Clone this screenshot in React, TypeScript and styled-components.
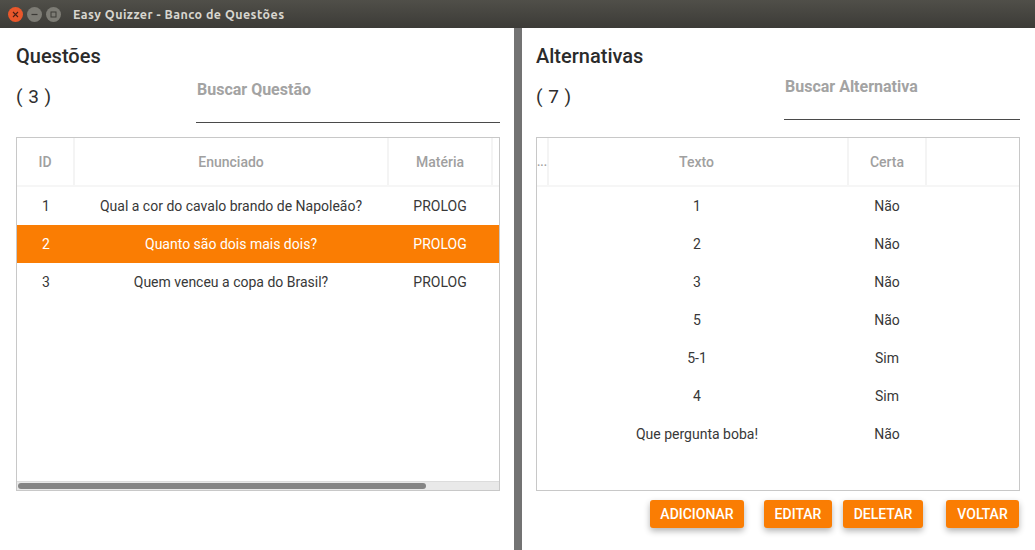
import React from 'react';
import styled, { createGlobalStyle } from 'styled-components';

const Global = createGlobalStyle`
    html, body {
        margin: 0;
        padding: 0;
        background: #fff;
        overflow: hidden;
    }
    #root {
        width: 1035px;
        height: 550px;
    }
`;

const Window = styled.div`
    display: flex;
    flex-direction: column;
    width: 1035px;
    height: 550px;
    font-family: Roboto, 'Liberation Sans', sans-serif;
    color: #2c2c2c;
    background: #fff;
`;

const TitleBar = styled.div`
    display: flex;
    align-items: center;
    flex: 0 0 28px;
    box-sizing: border-box;
    padding-left: 8px;
    background: linear-gradient(#504f49, #3c3b37);
`;

const WinButton = styled.div<{ $bg: string; $gap: number }>`
    display: flex;
    align-items: center;
    justify-content: center;
    width: 15px;
    height: 15px;
    margin-right: ${({ $gap }) => $gap}px;
    border-radius: 50%;
    background: ${({ $bg }) => $bg};
`;

const WindowTitle = styled.div`
    margin-left: 12px;
    font-family: Ubuntu, 'Noto Sans', 'Open Sans', sans-serif;
    font-size: 12.5px;
    font-weight: 700;
    letter-spacing: 0.45px;
    color: #d8d6cf;
`;

const Body = styled.div`
    display: flex;
    flex: 1;
    min-height: 0;
`;

const Pane = styled.div<{ $width: number; $left: number }>`
    display: flex;
    flex-direction: column;
    box-sizing: border-box;
    width: ${({ $width }) => $width}px;
    padding: 16px 0 0 ${({ $left }) => $left}px;
`;

const Divider = styled.div`
    flex: 0 0 8px;
    background: #737373;
`;

const Heading = styled.div`
    height: 24px;
    font-size: 20px;
    line-height: 24px;
    font-weight: 500;
    color: #2b2b2b;
`;

const InfoRow = styled.div`
    display: flex;
    justify-content: space-between;
    height: 69px;
    width: 484px;
`;

const Count = styled.div`
    margin-top: 17px;
    font-size: 19px;
    line-height: 24px;
    letter-spacing: 0.5px;
    color: #2f2f2f;
`;

const SearchField = styled.div<{ $width: number; $top: number }>`
    box-sizing: border-box;
    width: ${({ $width }) => $width}px;
    height: ${({ $top }) => $top}px;
    padding: ${({ $top }) => $top - 43}px 0 0 1px;
    border-bottom: 1px solid #4a4a4a;
    font-size: 16px;
    line-height: 20px;
    font-weight: 700;
    color: #a3a3a3;
`;

const TableBox = styled.div`
    position: relative;
    box-sizing: border-box;
    display: flex;
    flex-direction: column;
    width: 484px;
    height: 354px;
    border: 1px solid #c8c8c8;
    overflow: hidden;
`;

const HeaderRow = styled.div`
    display: flex;
    flex: 0 0 49px;
    box-sizing: border-box;
    border-bottom: 2px solid #f6f6f6;
`;

const HeaderCell = styled.div<{ $width: number; $pad?: number }>`
    display: flex;
    align-items: center;
    justify-content: center;
    flex: 0 0 ${({ $width }) => $width}px;
    box-sizing: border-box;
    padding-right: ${({ $pad = 0 }) => $pad}px;
    border-right: 2px solid #f4f4f4;
    font-size: 14px;
    font-weight: 500;
    color: #a0a0a0;
`;

const Clipped = styled(HeaderCell)`
    justify-content: flex-start;
    font-size: 12px;
`;

const Rows = styled.div`
    flex: 1;
`;

const Row = styled.div<{ $selected?: boolean }>`
    display: flex;
    height: 38px;
    align-items: center;
    background: ${({ $selected }) => ($selected ? '#fa7d03' : 'transparent')};
    color: ${({ $selected }) => ($selected ? '#fff' : '#383838')};
`;

const Cell = styled.div<{ $width: number; $pad?: number }>`
    flex: 0 0 ${({ $width }) => $width}px;
    box-sizing: border-box;
    padding-right: ${({ $pad = 2 }) => $pad}px;
    text-align: center;
    font-size: 14px;
    white-space: nowrap;
`;

const ScrollTrack = styled.div`
    flex: 0 0 8px;
    display: flex;
    align-items: center;
    background: #e9e9e9;
    border-top: 1px solid #dcdcdc;
`;

const ScrollThumb = styled.div`
    width: 408px;
    height: 6px;
    margin-left: 1px;
    border-radius: 3px;
    background: #858585;
`;

const ButtonBar = styled.div`
    display: flex;
    width: 483px;
    margin-top: 9px;
    justify-content: flex-end;
`;

const ActionButton = styled.button<{ $width: number; $left: number }>`
    box-sizing: border-box;
    width: ${({ $width }) => $width}px;
    height: 28px;
    margin-left: ${({ $left }) => $left}px;
    padding: 0;
    border: none;
    border-radius: 3px;
    background: #fa7d03;
    box-shadow: 0 3px 6px rgba(0, 0, 0, 0.3);
    color: #fff;
    font-family: inherit;
    font-size: 14px;
    font-weight: 500;
`;

const questionColumns = [58, 314, 104];
const answerColumns = [11, 300, 78];

const questions = [
    { id: 1, text: 'Qual a cor do cavalo brando de Napoleão?', subject: 'PROLOG' },
    { id: 2, text: 'Quanto são dois mais dois?', subject: 'PROLOG', selected: true },
    { id: 3, text: 'Quem venceu a copa do Brasil?', subject: 'PROLOG' },
];

const answers = [
    { text: '1', right: 'Não' },
    { text: '2', right: 'Não' },
    { text: '3', right: 'Não' },
    { text: '5', right: 'Não' },
    { text: '5-1', right: 'Sim' },
    { text: '4', right: 'Sim' },
    { text: 'Que pergunta boba!', right: 'Não' },
];

const buttons = [
    { label: 'ADICIONAR', width: 94, left: 0 },
    { label: 'EDITAR', width: 68, left: 20 },
    { label: 'DELETAR', width: 80, left: 11 },
    { label: 'VOLTAR', width: 73, left: 23 },
];

const App = () => (
    <Window>
        <Global />
        <TitleBar>
            <WinButton $bg="#e9572b" $gap={4}>
                <svg width="7" height="7" viewBox="0 0 7 7">
                    <path d="M1 1l5 5M6 1L1 6" stroke="#4a2015" strokeWidth="1.1" />
                </svg>
            </WinButton>
            <WinButton $bg="#7d7c75" $gap={4}>
                <svg width="7" height="7" viewBox="0 0 7 7">
                    <path d="M0.5 3.5h6" stroke="#3c3b37" strokeWidth="1.2" />
                </svg>
            </WinButton>
            <WinButton $bg="#7d7c75" $gap={0}>
                <svg width="7" height="7" viewBox="0 0 7 7">
                    <rect x="1" y="1" width="5" height="5" fill="none" stroke="#3c3b37" />
                </svg>
            </WinButton>
            <WindowTitle>Easy Quizzer - Banco de Questões</WindowTitle>
        </TitleBar>
        <Body>
            <Pane $width={514} $left={16}>
                <Heading>Questões</Heading>
                <InfoRow>
                    <Count>( 3 )</Count>
                    <SearchField $width={304} $top={55}>
                        Buscar Questão
                    </SearchField>
                </InfoRow>
                <TableBox>
                    <HeaderRow>
                        <HeaderCell $width={questionColumns[0]}>ID</HeaderCell>
                        <HeaderCell $width={questionColumns[1]}>Enunciado</HeaderCell>
                        <HeaderCell $width={questionColumns[2]}>Matéria</HeaderCell>
                    </HeaderRow>
                    <Rows>
                        {questions.map(({ id, text, subject, selected }) => (
                            <Row key={id} $selected={selected}>
                                <Cell $width={questionColumns[0]} $pad={0}>
                                    {id}
                                </Cell>
                                <Cell $width={questionColumns[1]}>{text}</Cell>
                                <Cell $width={questionColumns[2]}>{subject}</Cell>
                            </Row>
                        ))}
                    </Rows>
                    <ScrollTrack>
                        <ScrollThumb />
                    </ScrollTrack>
                </TableBox>
            </Pane>
            <Divider />
            <Pane $width={513} $left={14}>
                <Heading>Alternativas</Heading>
                <InfoRow>
                    <Count>( 7 )</Count>
                    <SearchField $width={236} $top={52}>
                        Buscar Alternativa
                    </SearchField>
                </InfoRow>
                <TableBox>
                    <HeaderRow>
                        <Clipped $width={answerColumns[0]}>...</Clipped>
                        <HeaderCell $width={answerColumns[1]} $pad={3}>
                            Texto
                        </HeaderCell>
                        <HeaderCell $width={answerColumns[2]}>Certa</HeaderCell>
                    </HeaderRow>
                    <Rows>
                        {answers.map(({ text, right }) => (
                            <Row key={text}>
                                <Cell $width={answerColumns[0]} />
                                <Cell $width={answerColumns[1]}>{text}</Cell>
                                <Cell $width={answerColumns[2]} $pad={0}>
                                    {right}
                                </Cell>
                            </Row>
                        ))}
                    </Rows>
                </TableBox>
                <ButtonBar>
                    {buttons.map(({ label, width, left }) => (
                        <ActionButton key={label} $width={width} $left={left}>
                            {label}
                        </ActionButton>
                    ))}
                </ButtonBar>
            </Pane>
        </Body>
    </Window>
);

export default App;
